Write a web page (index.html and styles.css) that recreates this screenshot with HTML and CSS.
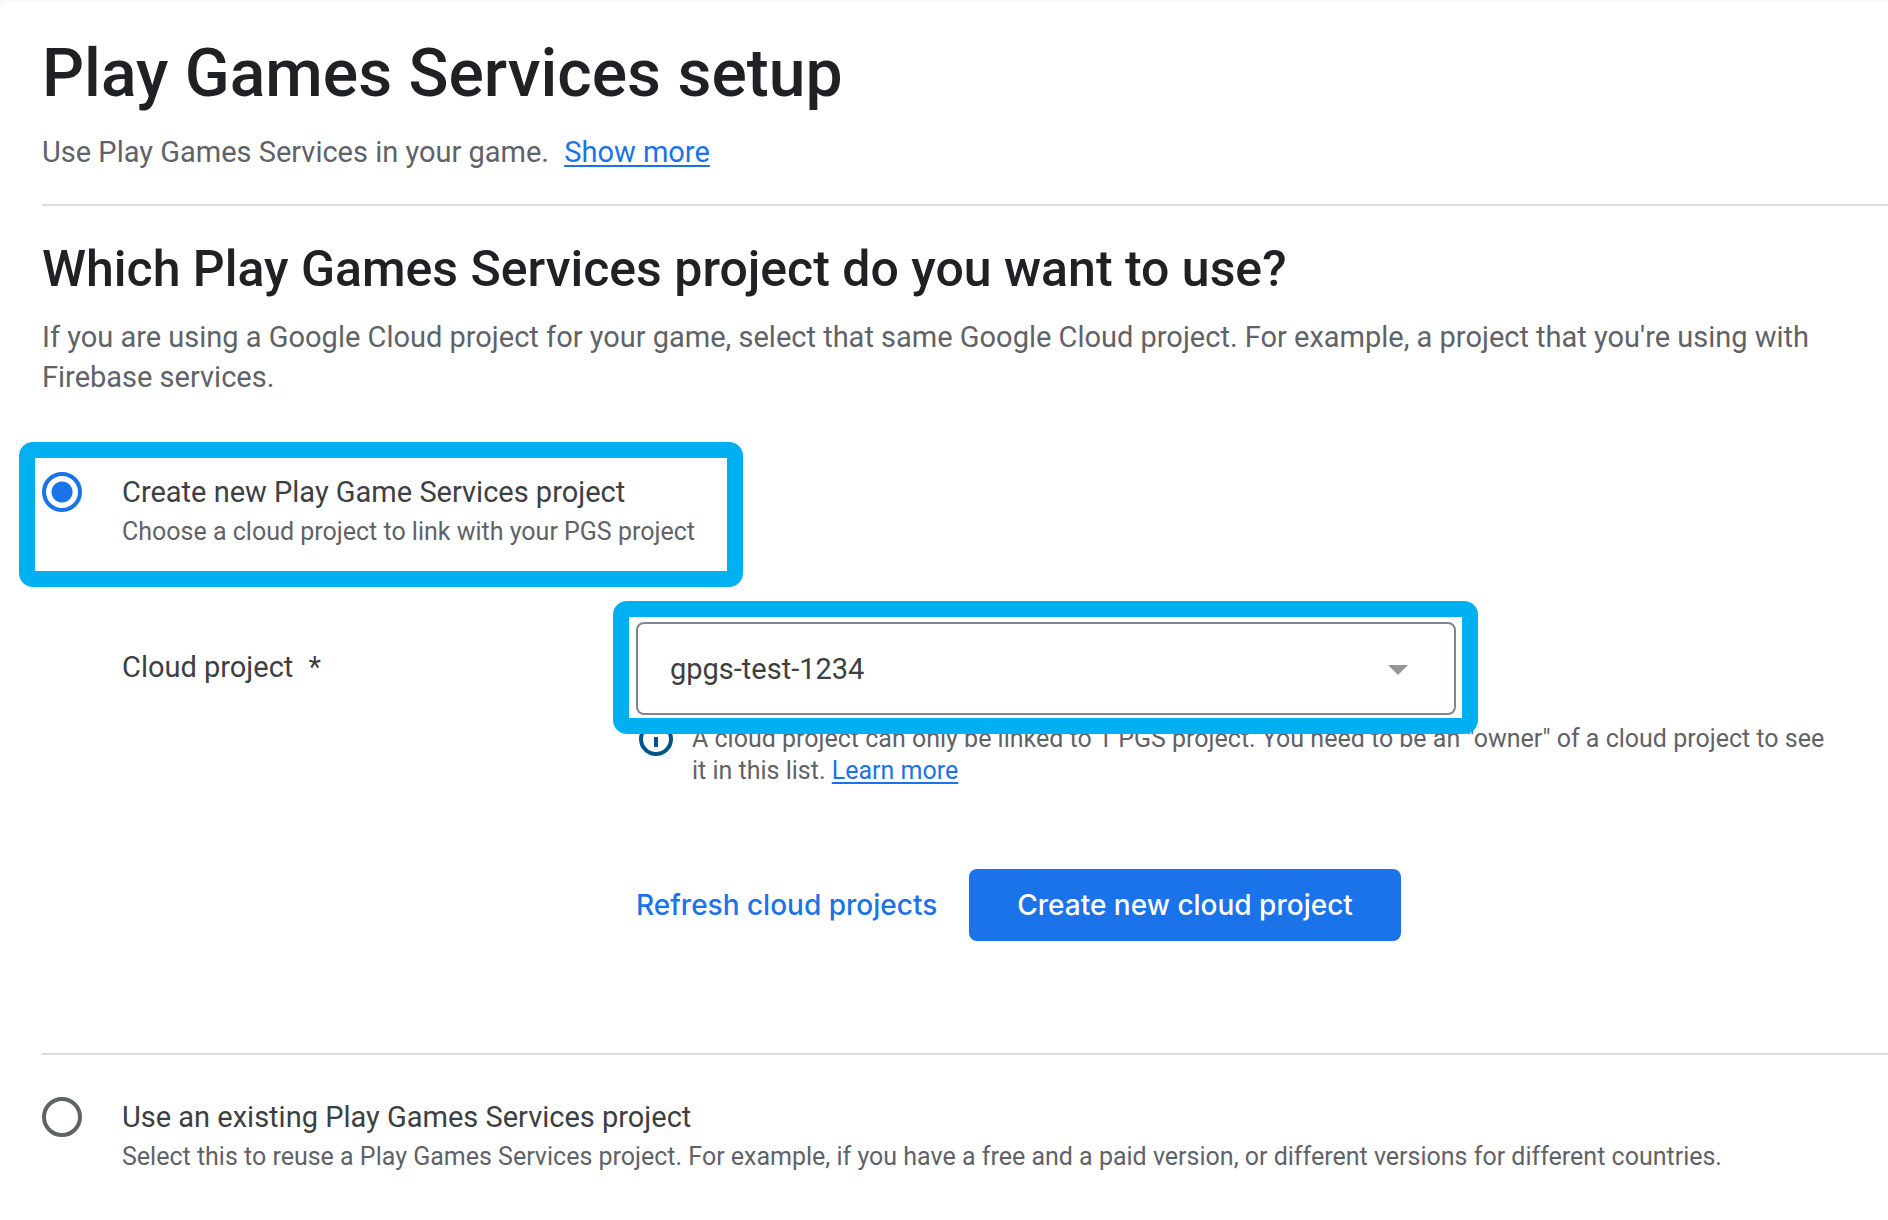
FILE: index.html
```html
<!DOCTYPE html>
<html lang="en">
<head>
<meta charset="utf-8">
<meta name="viewport" content="width=device-width, initial-scale=1">
<title>Play Games Services setup</title>
<link rel="stylesheet" href="styles.css">
</head>
<body>
<main class="page">
  <header class="page-header">
    <h1 class="page-title">Play Games Services setup</h1>
    <p class="lead">Use Play Games Services in your game. <a class="link more-link" href="#more">Show more</a></p>
  </header>

  <form class="setup">
    <section class="intro">
      <h2 class="section-title">Which Play Games Services project do you want to use?</h2>
      <p class="lead">If you are using a Google Cloud project for your game, select that same Google Cloud project. For example, a project that you're using with Firebase services.</p>
    </section>

    <section class="choice">
      <label class="option highlight highlight-option">
        <input class="radio" type="radio" name="project" value="new" checked>
        <span class="option-text">
          <span class="option-title">Create new Play Game Services project</span>
          <span class="option-hint">Choose a cloud project to link with your PGS project</span>
        </span>
      </label>

      <div class="field">
        <label class="field-label" for="cloud-project">Cloud project <span class="required">*</span></label>
        <div class="field-body">
          <div class="select-box highlight highlight-select">
            <select class="select" id="cloud-project">
              <option>gpgs-test-1234</option>
            </select>
            <svg class="select-arrow" viewBox="0 0 20 10" aria-hidden="true"><path d="M0 0h20L10 10z"/></svg>
          </div>
          <div class="help">
            <svg class="help-icon" viewBox="0 0 40 32" aria-hidden="true"><circle cx="20" cy="16" r="15"/><path d="M20 14v10M20 7v4"/></svg>
            <p class="help-text">A cloud project can only be linked to 1 PGS project. You need to be an "owner" of a cloud project to see it in this list. <a class="link" href="#learn">Learn more</a></p>
          </div>
          <div class="actions">
            <button class="button button-text" type="button">Refresh cloud projects</button>
            <button class="button button-primary" type="button">Create new cloud project</button>
          </div>
        </div>
      </div>
    </section>

    <section class="choice">
      <label class="option">
        <input class="radio" type="radio" name="project" value="existing">
        <span class="option-text">
          <span class="option-title">Use an existing Play Games Services project</span>
          <span class="option-hint">Select this to reuse a Play Games Services project. For example, if you have a free and a paid version, or different versions for different countries.</span>
        </span>
      </label>
    </section>
  </form>
</main>
</body>
</html>
```
FILE: styles.css
```css
* {
  box-sizing: border-box;
}

body {
  margin: 0;
  padding-top: 2px;
  background: #f8f9fe;
  color: #3c4043;
  font-family: Roboto, "Liberation Sans", sans-serif;
  font-size: 29px;
  line-height: 40px;
}

h1, h2, p {
  margin: 0;
}

.page {
  min-height: calc(100vh - 2px);
  padding: 32px 0 40px 42px;
  border-top-left-radius: 8px;
  background: #fff;
}

.page-header {
  padding-bottom: 32px;
  border-bottom: 2px solid #dadce0;
}

.page-title,
.section-title {
  color: #202124;
  font-weight: 500;
}

.page-title {
  margin-bottom: 18px;
  font-size: 66px;
  line-height: 80px;
}

.section-title {
  margin-bottom: 20px;
  font-size: 50px;
  line-height: 56px;
}

.lead {
  padding-right: 42px;
  color: #5f6368;
}

.link {
  color: #1a73e8;
  text-decoration: underline;
  text-decoration-thickness: 2px;
  text-underline-offset: 3px;
}

.more-link {
  margin-left: 8px;
}

.intro {
  padding: 35px 0 75px;
}

.choice + .choice {
  padding-top: 42px;
  border-top: 2px solid #dadce0;
}

.option {
  display: flex;
  gap: 40px;
  width: fit-content;
  padding-right: 42px;
}

.radio {
  appearance: none;
  flex: none;
  width: 40px;
  height: 40px;
  margin: 0;
  border: 4px solid #5f6368;
  border-radius: 50%;
}

.radio:checked {
  border-color: #1a73e8;
  background: radial-gradient(circle, #1a73e8 10px, #fff 11px);
}

.option-title,
.option-hint {
  display: block;
}

.option-hint {
  color: #5f6368;
  font-size: 25px;
}

/* Thick frames drawn over the step that needs attention. */
.highlight {
  position: relative;
}

.highlight::after {
  content: "";
  position: absolute;
  border: 16px solid #00b0f0;
  border-radius: 14px;
  pointer-events: none;
}

.highlight-option::after {
  inset: -30px -6px -35px -23px;
}

.highlight-select::after {
  inset: -21px -22px -19px -23px;
}

.field {
  display: grid;
  grid-template-columns: 514px 1fr;
  padding: 70px 48px 112px 80px;
}

.field-label {
  padding-top: 25px;
}

.required {
  margin-left: 8px;
}

.select-box {
  max-width: 820px;
}

.select {
  appearance: none;
  display: block;
  width: 100%;
  height: 93px;
  padding: 0 80px 0 32px;
  border: 2px solid #80868b;
  border-radius: 8px;
  background: #fff;
  color: inherit;
  font: inherit;
}

.select-arrow {
  position: absolute;
  top: 43px;
  right: 48px;
  width: 20px;
  height: 10px;
  fill: #949699;
}

.help {
  display: flex;
  gap: 16px;
  padding-top: 8px;
  color: #5f6368;
  font-size: 25px;
  line-height: 32px;
}

.help-icon {
  flex: none;
  width: 40px;
  height: 32px;
  overflow: visible;
  fill: none;
  stroke: #02568c;
  stroke-width: 4;
}

.actions {
  display: flex;
  gap: 32px;
  padding-top: 82px;
}

.button {
  height: 72px;
  border: 0;
  border-radius: 8px;
  font: 500 28px/40px Inter, Roboto, sans-serif;
  cursor: pointer;
}

.button-text {
  padding: 0;
  background: none;
  color: #1a73e8;
}

.button-primary {
  padding: 0 48px;
  background: #1a73e8;
  color: #fff;
}
```
